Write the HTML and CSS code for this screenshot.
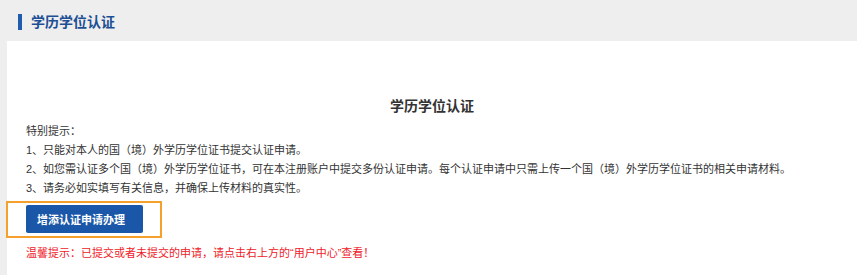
FILE: index.html
```html
<!DOCTYPE html>
<html lang="zh-CN">
<head>
<meta charset="utf-8">
<title>学历学位认证</title>
<link rel="stylesheet" href="styles.css">
</head>
<body>
<div class="page-header">
  <span class="header-bar"></span>
  <span class="header-title">学历学位认证</span>
</div>
<div class="panel">
  <h2 class="panel-title">学历学位认证</h2>
  <div class="notice">
    <p>特别提示：</p>
    <p>1、只能对本人的国（境）外学历学位证书提交认证申请。</p>
    <p>2、如您需认证多个国（境）外学历学位证书，可在本注册账户中提交多份认证申请。每个认证申请中只需上传一个国（境）外学历学位证书的相关申请材料。</p>
    <p>3、请务必如实填写有关信息，并确保上传材料的真实性。</p>
  </div>
  <div class="highlight">
    <button class="btn-primary" type="button">增添认证申请办理</button>
  </div>
  <p class="warm-tip">温馨提示：已提交或者未提交的申请，请点击右上方的“用户中心”查看！</p>
</div>
</body>
</html>
```
FILE: styles.css
```css
html, body {
  margin: 0;
  padding: 0;
}
body {
  background: #eeeeee;
  font-family: "Liberation Sans", "Noto Sans CJK SC", sans-serif;
  font-size: 11px;
  color: #333333;
  height: 275px;
  overflow: hidden;
}
.page-header {
  box-sizing: border-box;
  height: 41px;
  padding: 2px 0 0 18px;
  display: flex;
  align-items: center;
  gap: 9px;
}
.header-bar {
  width: 4px;
  height: 16px;
  background: #1f5cb0;
}
.header-title {
  font-size: 14px;
  font-weight: bold;
  color: #1d4f94;
  line-height: 20px;
}
.panel {
  margin-left: 7px;
  background: #ffffff;
  height: 234px;
  box-sizing: border-box;
  padding: 55px 0 0 19px;
}
.panel-title {
  margin: 0;
  font-size: 14px;
  font-weight: bold;
  line-height: 20px;
  text-align: center;
  color: #333333;
  padding-right: 19px;
}
.notice {
  margin-top: 6px;
}
.notice p {
  margin: 0;
  line-height: 19px;
  white-space: nowrap;
}
.highlight {
  display: inline-block;
  margin: 3px 0 0 -20px;
  border: 2px solid #f5a02a;
  padding: 2px 17px 3px 18px;
}
.btn-primary {
  display: block;
  width: 117px;
  height: 28px;
  border: 0;
  border-radius: 2px;
  background: #1a57a8;
  color: #ffffff;
  font-family: inherit;
  font-size: 11px;
  font-weight: bold;
  text-align: left;
  padding: 0 0 0 11px;
}
.warm-tip {
  margin: 6px 0 0;
  line-height: 19px;
  color: #ee2128;
}
```
